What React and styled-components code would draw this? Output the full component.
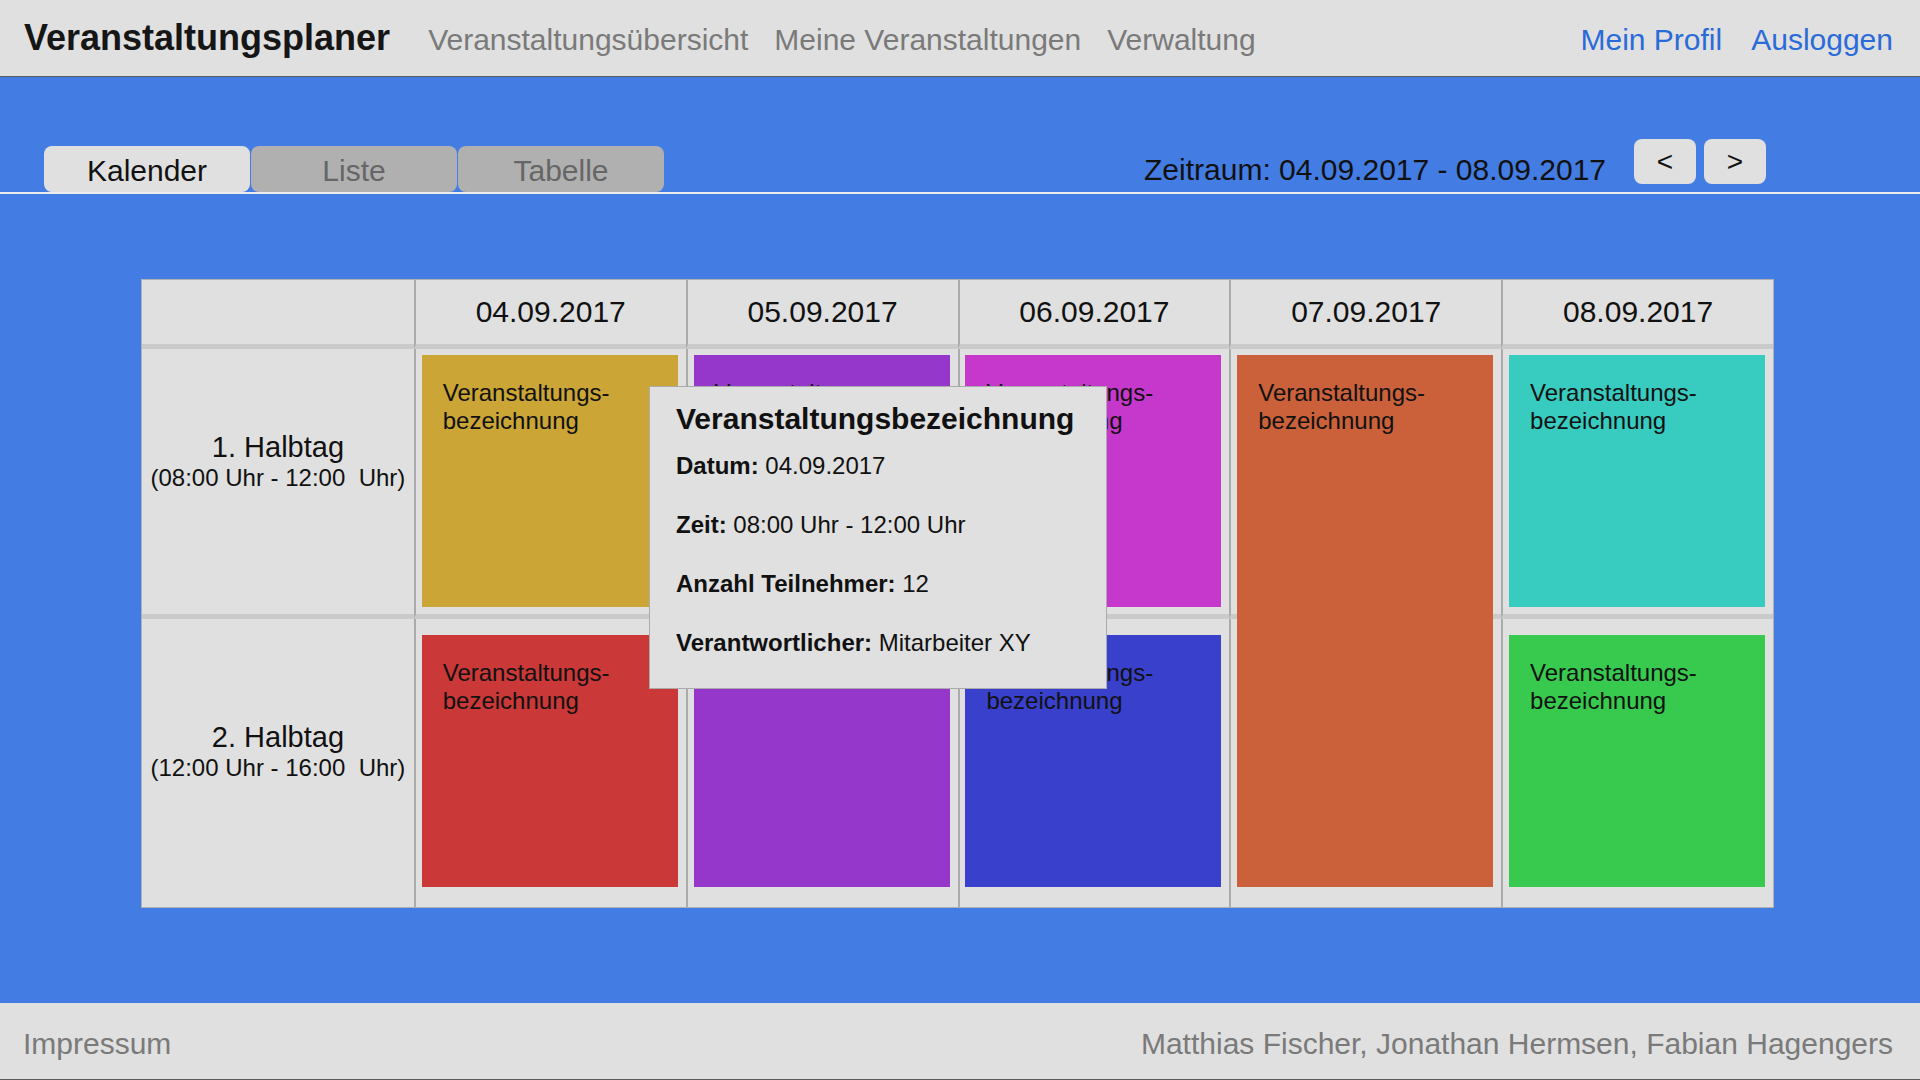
import React from 'react';
import styled, { createGlobalStyle } from 'styled-components';

const GlobalStyle = createGlobalStyle`
  html, body { margin: 0; padding: 0; }
  body { font-family: "Liberation Sans", Arial, sans-serif; color: #111; }
  *, *::before, *::after { box-sizing: border-box; }
`;

const Page = styled.div`
  min-height: 100vh;
  display: flex;
  flex-direction: column;
`;

const Header = styled.header`
  height: 77px;
  background: #e0e0e0;
  border-bottom: 1px solid #5c5c5c;
  display: flex;
  align-items: baseline;
  padding: 17px 27px 0 24px;
`;

const Brand = styled.div`
  font-size: 36px;
  font-weight: bold;
  color: #161616;
  margin-right: 38px;
`;

const Nav = styled.nav`
  display: flex;
  align-items: baseline;
  gap: ${p => p.$gap || 26}px;
  margin-left: ${p => (p.$right ? 'auto' : '0')};
`;

const NavLink = styled.a`
  font-size: 30px;
  color: ${p => (p.$accent ? '#2a6bd9' : '#7a7a7a')};
  text-decoration: none;
  cursor: pointer;
`;

const Main = styled.main`
  flex: 1;
  background: #437ce3;
  padding-top: 62px;
`;

const Toolbar = styled.div`
  display: flex;
  align-items: flex-end;
  border-bottom: 2px solid #ececec;
  padding: 0 154px 0 44px;
`;

const Tabs = styled.div`
  display: flex;
  gap: 1px;
`;

const Tab = styled.button`
  width: 206px;
  height: 46px;
  border: none;
  border-radius: 8px;
  padding: 3px 0 0;
  font-family: inherit;
  font-size: 30px;
  line-height: 43px;
  background: ${p => (p.$active ? '#e0e0e0' : '#b0b0b0')};
  color: ${p => (p.$active ? '#111' : '#666')};
  cursor: pointer;
`;

const RangeArea = styled.div`
  margin-left: auto;
  display: flex;
  align-items: flex-end;
  gap: 28px;
`;

const RangeText = styled.div`
  font-size: 30px;
  line-height: 34px;
  margin-bottom: 5px;
  color: #111;
`;

const Arrows = styled.div`
  display: flex;
  gap: 8px;
  margin-bottom: 8px;
`;

const ArrowButton = styled.button`
  width: 62px;
  height: 45px;
  border: none;
  border-radius: 8px;
  background: #e0e0e0;
  font-family: inherit;
  font-size: 28px;
  line-height: 45px;
  padding: 0;
  color: #111;
  cursor: pointer;
`;

const Calendar = styled.div`
  position: relative;
  width: 1633px;
  margin: 85px 0 0 141px;
  display: grid;
  grid-template-columns: repeat(6, 1fr);
  grid-template-rows: 69px 270px 288px;
  background: #e0e0e0;
  border: 1px solid #b0b0b0;
`;

const Cell = styled.div`
  grid-column: ${p => p.$col};
  grid-row: ${p => p.$row};
  border-left: ${p => (p.$col > 1 ? '2px solid #ababab' : 'none')};
  border-bottom: ${p => (p.$row < 3 ? '5px solid #cacaca' : 'none')};
`;

const DateCell = styled(Cell)`
  display: flex;
  align-items: center;
  justify-content: center;
  font-size: 30px;
  color: #111;
`;

const LabelCell = styled(Cell)`
  display: flex;
  flex-direction: column;
  align-items: center;
  padding-top: ${p => p.$top}px;
  color: #111;
`;

const LabelTitle = styled.div`
  font-size: 29px;
  line-height: 33px;
`;

const LabelTime = styled.div`
  font-size: 24px;
  line-height: 27px;
  white-space: pre;
`;

const Event = styled.div`
  grid-column: ${p => p.$col};
  grid-row: ${p => p.$row} / span ${p => p.$span};
  justify-self: center;
  align-self: start;
  width: 256px;
  height: ${p => (p.$span > 1 ? 532 : 252)}px;
  margin-top: ${p => (p.$row === 2 ? 6 : 16)}px;
  background: ${p => p.$color};
  padding: 24px 21px;
  font-size: 24px;
  line-height: 27.6px;
  color: #111;
  z-index: 1;
`;

const Tooltip = styled.div`
  position: absolute;
  left: 507px;
  top: 106px;
  width: 458px;
  background: #e0e0e0;
  border: 1px solid #ababab;
  padding: 15px 20px 31px 26px;
  z-index: 2;
  display: flex;
  flex-direction: column;
  gap: 31px;
`;

const TooltipTitle = styled.div`
  font-size: 30px;
  line-height: 34px;
  font-weight: bold;
  color: #111;
  margin-bottom: -15px;
`;

const TooltipRow = styled.div`
  font-size: 24px;
  line-height: 28px;
  color: #111;
  b { font-weight: bold; }
`;

const Footer = styled.footer`
  height: 77px;
  background: #e0e0e0;
  border-bottom: 1px solid #5c5c5c;
  display: flex;
  justify-content: space-between;
  align-items: flex-start;
  padding: 24px 27px 0 23px;
  font-size: 30px;
  line-height: 34px;
  color: #7a7a7a;
`;

const days = ['04.09.2017', '05.09.2017', '06.09.2017', '07.09.2017', '08.09.2017'];

const halfDays = [
  { title: '1. Halbtag', time: '(08:00 Uhr - 12:00\u00a0 Uhr)', top: 82 },
  { title: '2. Halbtag', time: '(12:00 Uhr - 16:00\u00a0 Uhr)', top: 102 },
];

const events = [
  { col: 2, row: 2, span: 1, color: '#cba536' },
  { col: 3, row: 2, span: 2, color: '#9637cb' },
  { col: 4, row: 2, span: 1, color: '#c638cb' },
  { col: 5, row: 2, span: 2, color: '#ca613a' },
  { col: 6, row: 2, span: 1, color: '#38cbc0' },
  { col: 2, row: 3, span: 1, color: '#ca3838' },
  { col: 4, row: 3, span: 1, color: '#3940cb' },
  { col: 6, row: 3, span: 1, color: '#38ca4e' },
];

export default function App() {
  return (
    <>
      <GlobalStyle />
      <Page>
        <Header>
          <Brand>Veranstaltungsplaner</Brand>
          <Nav>
            <NavLink>Veranstaltungsübersicht</NavLink>
            <NavLink>Meine Veranstaltungen</NavLink>
            <NavLink>Verwaltung</NavLink>
          </Nav>
          <Nav $right $gap={29}>
            <NavLink $accent>Mein Profil</NavLink>
            <NavLink $accent>Ausloggen</NavLink>
          </Nav>
        </Header>
        <Main>
          <Toolbar>
            <Tabs>
              <Tab $active>Kalender</Tab>
              <Tab>Liste</Tab>
              <Tab>Tabelle</Tab>
            </Tabs>
            <RangeArea>
              <RangeText>Zeitraum: 04.09.2017 - 08.09.2017</RangeText>
              <Arrows>
                <ArrowButton>&lt;</ArrowButton>
                <ArrowButton>&gt;</ArrowButton>
              </Arrows>
            </RangeArea>
          </Toolbar>
          <Calendar>
            <Cell $col={1} $row={1} />
            {days.map((d, i) => (
              <DateCell key={d} $col={i + 2} $row={1}>{d}</DateCell>
            ))}
            {halfDays.map((h, r) => (
              <React.Fragment key={h.title}>
                <LabelCell $col={1} $row={r + 2} $top={h.top}>
                  <LabelTitle>{h.title}</LabelTitle>
                  <LabelTime>{h.time}</LabelTime>
                </LabelCell>
                {days.map((d, i) => (
                  <Cell key={d} $col={i + 2} $row={r + 2} />
                ))}
              </React.Fragment>
            ))}
            {events.map((e, i) => (
              <Event key={i} $col={e.col} $row={e.row} $span={e.span} $color={e.color}>
                Veranstaltungs-bezeichnung
              </Event>
            ))}
            <Tooltip>
              <TooltipTitle>Veranstaltungsbezeichnung</TooltipTitle>
              <TooltipRow><b>Datum:</b> 04.09.2017</TooltipRow>
              <TooltipRow><b>Zeit:</b> 08:00 Uhr - 12:00 Uhr</TooltipRow>
              <TooltipRow><b>Anzahl Teilnehmer:</b> 12</TooltipRow>
              <TooltipRow><b>Verantwortlicher:</b> Mitarbeiter XY</TooltipRow>
            </Tooltip>
          </Calendar>
        </Main>
        <Footer>
          <span>Impressum</span>
          <span>Matthias Fischer, Jonathan Hermsen, Fabian Hagengers</span>
        </Footer>
      </Page>
    </>
  );
}
